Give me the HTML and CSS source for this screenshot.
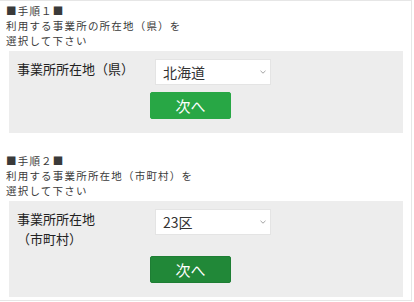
FILE: index.html
```html
<!DOCTYPE html>
<html lang="ja">
<head>
	<meta charset="UTF-8">
	<meta name="viewport" content="width=device-width, initial-scale=1.0">
	<title>事業所所在地の選択</title>
	<link rel="stylesheet" href="styles.css">
</head>
<body>

	<div class="page">

		<div class="step">
			<p class="step-title">■手順１■<br>利用する事業所の所在地（県）を<br>選択して下さい</p>
			<form class="panel">
				<label class="panel-label" for="pref">事業所所在地（県）</label>
				<div class="select-wrap">
					<select id="pref" class="select">
						<option>北海道</option>
					</select>
					<svg class="chevron" width="6" height="4" viewBox="0 0 6 4"><path d="M0.5 0.8 L3 3.2 L5.5 0.8" fill="none" stroke="#999" stroke-width="0.9"/></svg>
				</div>
				<div class="panel-action">
					<button type="button" class="btn">次へ</button>
				</div>
			</form>
		</div>

		<div class="step">
			<p class="step-title">■手順２■<br>利用する事業所所在地（市町村）を<br>選択して下さい</p>
			<form class="panel">
				<label class="panel-label" for="city">事業所所在地<br>（市町村）</label>
				<div class="select-wrap">
					<select id="city" class="select">
						<option>23区</option>
					</select>
					<svg class="chevron" width="6" height="4" viewBox="0 0 6 4"><path d="M0.5 0.8 L3 3.2 L5.5 0.8" fill="none" stroke="#999" stroke-width="0.9"/></svg>
				</div>
				<div class="panel-action">
					<button type="button" class="btn active">次へ</button>
				</div>
			</form>
		</div>

	</div>

</body>
</html>
```

FILE: styles.css
```css
* {
	margin: 0;
	padding: 0;
	box-sizing: border-box;
}

body {
	background-color: #fff;
	font-family: "Noto Sans CJK JP", "Noto Sans", sans-serif;
	color: #222;
}

.page {
	width: 412px;
	height: 301px;
	border-top: 1px solid #e6e6e6;
	border-right: 1px solid #e6e6e6;
	border-bottom: 1px solid #e6e6e6;
	padding: 2px 8px 0 9px;
}

.step + .step {
	margin-top: 20px;
}

.step-title {
	font-family: "Noto Sans CJK JP", serif;
	font-size: 10.5px;
	line-height: 15px;
	letter-spacing: 1.2px;
	color: #3a3a3a;
	margin-left: -3px;
	margin-bottom: 3px;
}

.panel {
	background-color: #ededed;
	display: grid;
	grid-template-columns: 133px 121px;
	row-gap: 7px;
	padding: 8px 9px 14px 8px;
}

.panel-label {
	font-size: 13px;
	line-height: 20px;
	color: #222;
}

.select-wrap {
	position: relative;
	margin-left: 5px;
	width: 116px;
	height: 26px;
}

.select {
	appearance: none;
	-webkit-appearance: none;
	width: 100%;
	height: 100%;
	border: 1px solid #e4e4e4;
	background-color: #fff;
	font-family: "Noto Sans CJK JP", "Noto Sans", sans-serif;
	font-size: 14px;
	color: #333;
	padding: 0 14px 0 7px;
	outline: none;
}

.chevron {
	position: absolute;
	right: 5px;
	top: 11px;
}

.panel-action {
	grid-column: 2;
}

.btn {
	width: 81px;
	height: 27px;
	border: 1px solid #28a745;
	border-radius: 2px;
	background-color: #28a745;
	color: #fff;
	font-family: "Noto Sans CJK JP", "Noto Sans", sans-serif;
	font-size: 15px;
	cursor: pointer;
}

.btn.active {
	background-color: #218838;
	border-color: #1e7e34;
}
```
